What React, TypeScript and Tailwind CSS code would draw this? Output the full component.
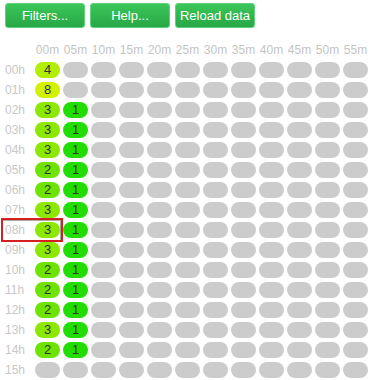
import React from "react";

const minutes = ["00m", "05m", "10m", "15m", "20m", "25m", "30m", "35m", "40m", "45m", "50m", "55m"];

// counts per hour, index = 5-minute slot
const counts: Record<number, number[]> = {
    0: [4],
    1: [8],
    2: [3, 1],
    3: [3, 1],
    4: [3, 1],
    5: [2, 1],
    6: [2, 1],
    7: [3, 1],
    8: [3, 1],
    9: [3, 1],
    10: [2, 1],
    11: [2, 1],
    12: [2, 1],
    13: [3, 1],
    14: [2, 1],
};

const cellColor: Record<number, string> = {
    1: "bg-[#22de00]",
    2: "bg-[#6ee300]",
    3: "bg-[#8ce800]",
    4: "bg-[#b2ee00]",
    8: "bg-[#d2f200]",
};

const buttons = ["Filters...", "Help...", "Reload data"];

function Cell({ value }: { value?: number }) {
    return (
        <div
            className={`flex h-4 items-center justify-center rounded-full text-[13px] leading-4 text-[#333] ${
                value ? cellColor[value] : "bg-[#cccccc]"
            }`}
        >
            {value ?? ""}
        </div>
    );
}

export default function App() {
    const hours = Array.from({ length: 16 }, (_, i) => i);

    return (
        <div className="h-[380px] overflow-hidden bg-white font-['Liberation_Sans',Arial,sans-serif]">
            {/* Toolbar */}
            <div className="flex gap-[5px] pl-[5px] pt-[3px]">
                {buttons.map((b) => (
                    <button
                        key={b}
                        type="button"
                        className="h-[25px] w-[80px] rounded-[3px] border border-[#63d17c] bg-gradient-to-b from-[#3bc65a] to-[#27a846] text-[13px] text-white shadow-[0_0_1px_rgba(0,0,0,0.15)]"
                    >
                        {b}
                    </button>
                ))}
            </div>

            {/* Grid */}
            <div className="mt-[14px] flex flex-col gap-1">
                <div className="grid h-4 grid-cols-[32px_repeat(12,25px)] gap-x-[3px] text-[12px] leading-4 text-[#c4c4c4]">
                    <div />
                    {minutes.map((m) => (
                        <div key={m} className="text-center">
                            {m}
                        </div>
                    ))}
                </div>
                {hours.map((h) => {
                    const row = counts[h] ?? [];
                    return (
                        <div
                            key={h}
                            className="relative grid h-4 grid-cols-[32px_repeat(12,25px)] gap-x-[3px]"
                        >
                            <div className="pl-[5px] text-[12px] leading-4 text-[#c8c8c8]">
                                {String(h).padStart(2, "0")}h
                            </div>
                            {minutes.map((m, i) => (
                                <Cell key={m} value={row[i]} />
                            ))}
                            {h === 8 && (
                                <div className="pointer-events-none absolute left-[1px] top-[-4px] h-[24px] w-[62px] border-2 border-[#d42020]">
                                    <div className="h-full w-full border-r border-t border-[#a8a8a8]" />
                                </div>
                            )}
                        </div>
                    );
                })}
                {/* next row, only its top edge shows */}
                <div className="grid h-4 grid-cols-[32px_repeat(12,25px)] gap-x-[3px]">
                    <div />
                    {minutes.map((m) => (
                        <Cell key={m} />
                    ))}
                </div>
            </div>
        </div>
    );
}
